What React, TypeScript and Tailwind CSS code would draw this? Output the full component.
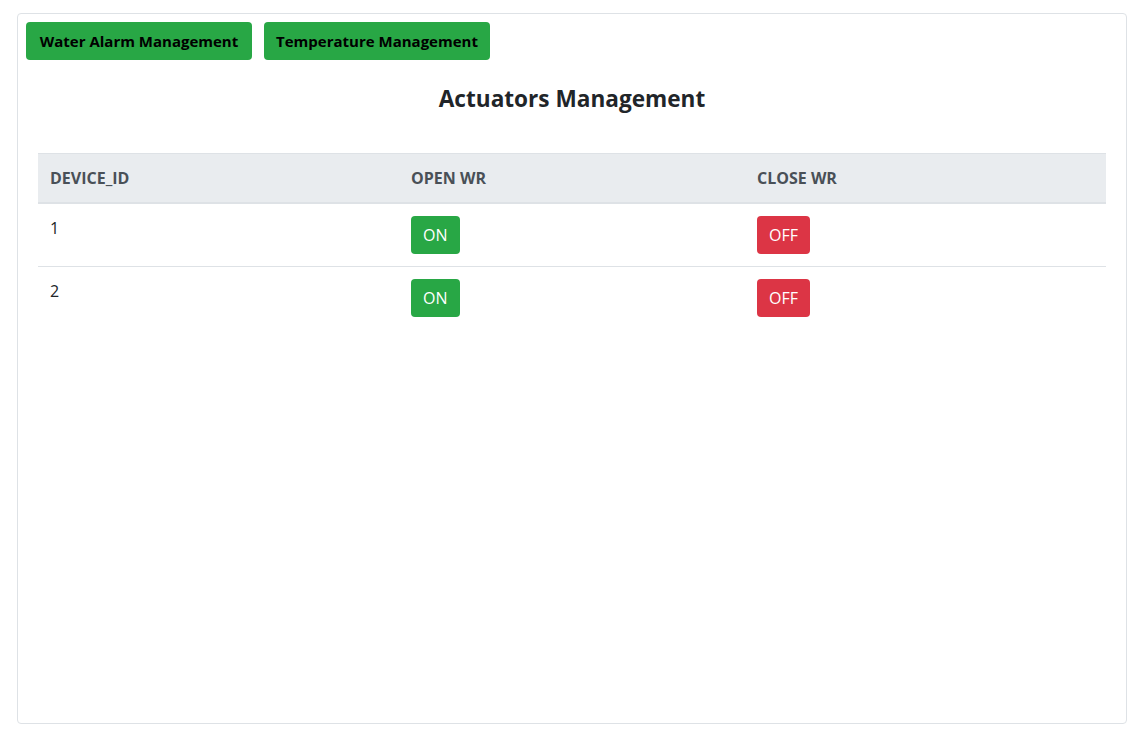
const rows = [1, 2];

export default function App() {
  return (
    <div className="min-h-screen bg-white pt-[13px] pl-[17px] font-['Open_Sans',sans-serif] text-[#212529]">
      <div className="w-[1110px] h-[711px] rounded border border-[#dee2e6] p-2">
        <div className="flex gap-3">
          <button className="h-[38px] w-[226px] rounded bg-[#28a745] text-[15px] font-bold text-black">
            Water Alarm Management
          </button>
          <button className="h-[38px] w-[226px] rounded bg-[#28a745] text-[15px] font-bold text-black">
            Temperature Management
          </button>
        </div>
        <h3 className="mt-[24px] text-center text-[22.6px] font-bold leading-[30px] text-[#212529]">
          Actuators Management
        </h3>
        <div className="mx-3 mt-[39px]">
          <table className="w-full border-collapse text-left text-[16px]">
            <thead>
              <tr className="bg-[#e9ecef] text-[#495057]">
                <th className="w-[361px] border-t border-b-2 border-[#dee2e6] px-3 py-3 font-bold leading-6">DEVICE_ID</th>
                <th className="w-[346px] border-t border-b-2 border-[#dee2e6] px-3 py-3 font-bold leading-6">OPEN WR</th>
                <th className="border-t border-b-2 border-[#dee2e6] px-3 py-3 font-bold leading-6">CLOSE WR</th>
              </tr>
            </thead>
            <tbody>
              {rows.map((id, i) => (
                <tr key={id} className={i < rows.length - 1 ? "border-b border-[#dee2e6]" : ""}>
                  <td className="px-3 py-3 align-top leading-6">{id}</td>
                  <td className="px-3 py-3 align-top">
                    <button className="h-[38px] rounded bg-[#28a745] px-3 text-[16px] text-white">ON</button>
                  </td>
                  <td className="px-3 py-3 align-top">
                    <button className="h-[38px] rounded bg-[#dc3545] px-3 text-[16px] text-white">OFF</button>
                  </td>
                </tr>
              ))}
            </tbody>
          </table>
        </div>
      </div>
    </div>
  );
}
